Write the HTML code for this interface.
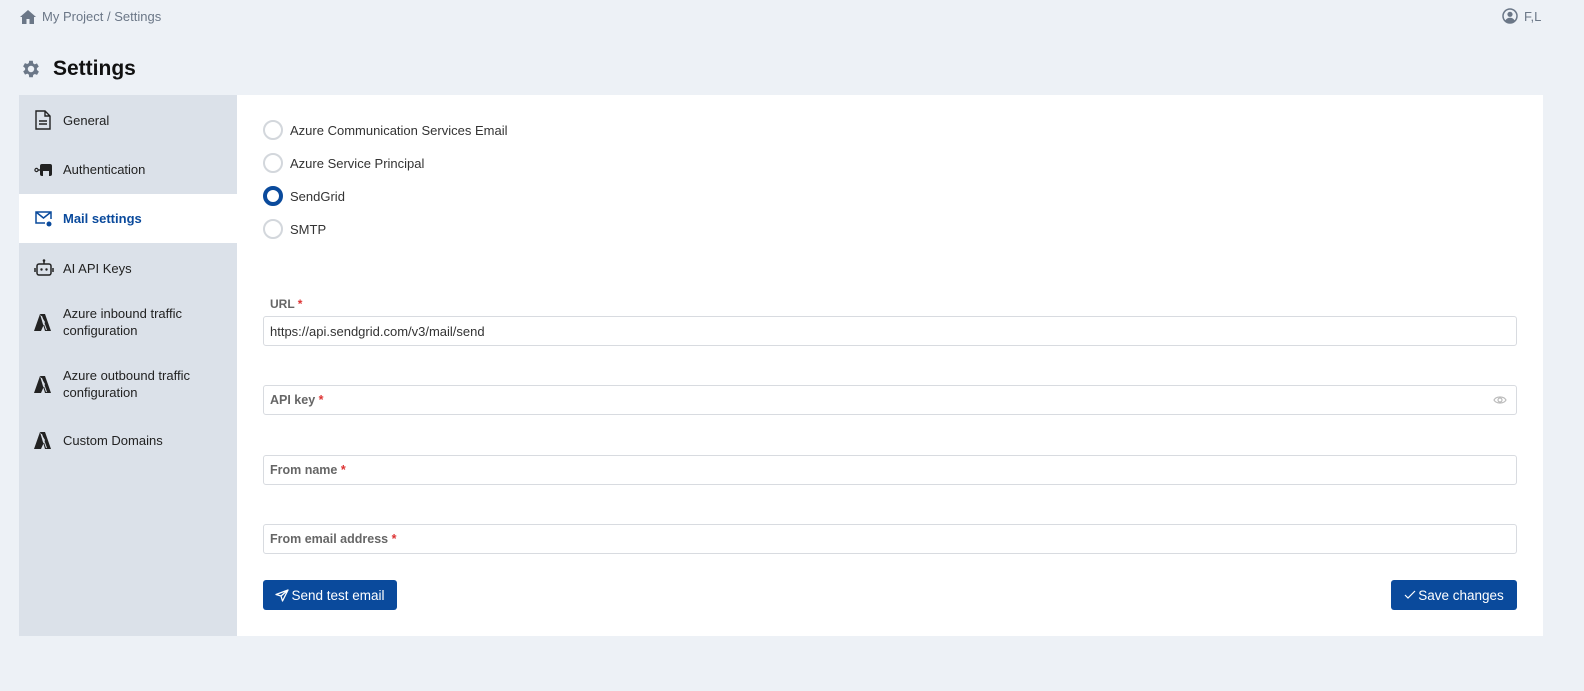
<!DOCTYPE html>
<html><head><style>
*{box-sizing:border-box;margin:0;padding:0}
body{width:1584px;height:691px;background:#edf1f6;font-family:"Liberation Sans",sans-serif;position:relative;overflow:hidden;color:#222}
.a{position:absolute}
.crumb{left:20px;top:9px;font-size:13px;color:#6b7787;display:flex;align-items:center;gap:6px}
.title{left:20px;top:57px;font-size:21px;font-weight:bold;color:#111;display:flex;align-items:center;gap:11px}
.side{left:19px;top:95px;width:218px;height:541px;background:#dbe1e9}
.main{left:237px;top:95px;width:1306px;height:541px;background:#fff}
.item{position:absolute;left:0;width:218px;display:flex;align-items:center;font-size:13px;color:#222}
.item svg{position:absolute;left:15px}
.item span{position:absolute;left:44px;line-height:17px}
.radio{position:absolute;left:26px;width:20px;height:20px;border-radius:50%;border:2px solid #d3d7dc}
.rl{position:absolute;left:53px;font-size:13px;color:#333}
.inp{position:absolute;left:26px;width:1254px;height:30px;border:1px solid #d8dbe0;border-radius:3px;font-size:13px;padding:0 6px;display:flex;align-items:center;color:#333}
.lbl{font-weight:bold;color:#666;font-size:12.5px}
.req{color:#d33}
.btn{position:absolute;top:485px;height:30px;background:#0a4a9c;color:#fff;border-radius:3px;font-size:13.5px;display:flex;align-items:center;justify-content:center;gap:2px}
</style></head><body>
<div class="a crumb"><svg width="16" height="14" viewBox="0 0 16 14"><path d="M8 0L0 7h2v7h4.5V9h3v5H14V7h2z" fill="#6b7787"/></svg>My Project&nbsp;/&nbsp;Settings</div>
<div class="a" style="left:1502px;top:8px;font-size:13px;color:#6b7787;display:flex;align-items:center;gap:6px"><svg width="16" height="16" viewBox="0 0 16 16"><circle cx="8" cy="8" r="7" fill="none" stroke="#6b7787" stroke-width="1.5"/><circle cx="8" cy="6.3" r="2.6" fill="#6b7787"/><path d="M3.3 12.5c1.2-2 2.8-2.8 4.7-2.8s3.5.8 4.7 2.8A6 6 0 0 1 3.3 12.5z" fill="#6b7787"/></svg>F,L</div>
<div class="a title"><svg width="22" height="22" viewBox="0 0 24 24"><path fill="#6b7787" d="M19.4 13a7.5 7.5 0 0 0 0-2l2.1-1.6-2-3.5-2.5 1a7.6 7.6 0 0 0-1.7-1L15 3h-4l-.4 2.6a7.6 7.6 0 0 0-1.7 1l-2.5-1-2 3.5L6.6 11a7.5 7.5 0 0 0 0 2l-2.1 1.6 2 3.5 2.5-1c.5.4 1.1.7 1.7 1L11 21h4l.4-2.6c.6-.3 1.2-.6 1.7-1l2.5 1 2-3.5zM13 15.5a3.5 3.5 0 1 1 0-7 3.5 3.5 0 0 1 0 7z" transform="translate(-1 0)"/></svg>Settings</div>
<div class="a side">
 <div class="item" style="top:0;height:50px"><svg width="18" height="20" viewBox="0 0 18 20"><path d="M2 1h9l5 5v13H2z M11 1v5h5" fill="none" stroke="#222" stroke-width="1.4"/><path d="M5 11h8M5 14h8" stroke="#222" stroke-width="1.4"/></svg><span>General</span></div>
 <div class="item" style="top:50px;height:49px"><svg width="20" height="16" viewBox="0 0 20 16"><rect x="6" y="2" width="12" height="12" rx="2" fill="#222"/><rect x="9" y="9" width="6" height="6" fill="#dbe1e9"/><circle cx="2.5" cy="8" r="1.6" fill="none" stroke="#222" stroke-width="1.2"/><path d="M4 8h3" stroke="#222" stroke-width="1.4"/></svg><span>Authentication</span></div>
 <div class="item" style="top:99px;height:49px;background:#fff;color:#0a4a9c;font-weight:bold"><svg width="20" height="18" viewBox="0 0 20 18"><path d="M11 13H2V2h15v7M2 2l7.5 6L17 2" fill="none" stroke="#0a4a9c" stroke-width="1.5"/><circle cx="15" cy="14" r="2.5" fill="#0a4a9c"/></svg><span>Mail settings</span></div>
 <div class="item" style="top:148px;height:50px"><svg width="20" height="18" viewBox="0 0 20 18"><rect x="3" y="5" width="14" height="11" rx="2" fill="none" stroke="#222" stroke-width="1.5"/><path d="M10 5V2M1 9v4M19 9v4" stroke="#222" stroke-width="1.5"/><circle cx="10" cy="1.5" r="1.3" fill="#222"/><circle cx="7.5" cy="10.5" r="1.2" fill="#222"/><circle cx="12.5" cy="10.5" r="1.2" fill="#222"/></svg><span>AI API Keys</span></div>
 <div class="item" style="top:202px;height:50px"><svg width="18" height="17" viewBox="0 0 18 17"><path d="M6 0h5l6 17h-6zM6 0L0 17h7l4-9z" fill="#222"/><path d="M7.5 2l5 14" stroke="#dbe1e9" stroke-width="1"/></svg><span>Azure inbound traffic<br>configuration</span></div>
 <div class="item" style="top:264px;height:50px"><svg width="18" height="17" viewBox="0 0 18 17"><path d="M6 0h5l6 17h-6zM6 0L0 17h7l4-9z" fill="#222"/><path d="M7.5 2l5 14" stroke="#dbe1e9" stroke-width="1"/></svg><span>Azure outbound traffic<br>configuration</span></div>
 <div class="item" style="top:336px;height:18px"><svg width="18" height="17" viewBox="0 0 18 17"><path d="M6 0h5l6 17h-6zM6 0L0 17h7l4-9z" fill="#222"/><path d="M7.5 2l5 14" stroke="#dbe1e9" stroke-width="1"/></svg><span>Custom Domains</span></div>
</div>
<div class="a main">
 <div class="radio" style="top:25px"></div><div class="rl" style="top:28px">Azure Communication Services Email</div>
 <div class="radio" style="top:58px"></div><div class="rl" style="top:61px">Azure Service Principal</div>
 <div class="radio" style="top:91px;border:4px solid #0a4a9c"></div><div class="rl" style="top:94px">SendGrid</div>
 <div class="radio" style="top:124px"></div><div class="rl" style="top:127px">SMTP</div>
 <div class="a lbl" style="left:33px;top:202px;font-size:12px">URL <span class="req">*</span></div>
 <div class="inp" style="top:221px">https://api.sendgrid.com/v3/mail/send</div>
 <div class="inp" style="top:290px"><span class="lbl">API key <span class="req">*</span></span><svg style="position:absolute;right:9px" width="14" height="10" viewBox="0 0 14 10"><path d="M1 5c2-4 10-4 12 0-2 4-10 4-12 0z" fill="none" stroke="#bbb" stroke-width="1.2"/><circle cx="7" cy="5" r="2" fill="none" stroke="#bbb" stroke-width="1.2"/></svg></div>
 <div class="inp" style="top:360px"><span class="lbl">From name <span class="req">*</span></span></div>
 <div class="inp" style="top:429px"><span class="lbl">From email address <span class="req">*</span></span></div>
 <div class="btn" style="left:26px;width:134px"><svg width="14" height="13" viewBox="0 0 14 13"><path d="M13 1L1 5.5l5 1.5 1.5 5zM6 7l7-6" fill="none" stroke="#fff" stroke-width="1.3" stroke-linejoin="round"/></svg>Send test email</div>
 <div class="btn" style="left:1154px;width:126px"><svg width="12" height="10" viewBox="0 0 12 10"><path d="M1 5l3 3 7-7" fill="none" stroke="#fff" stroke-width="1.2"/></svg>Save changes</div>
</div>
</body></html>
